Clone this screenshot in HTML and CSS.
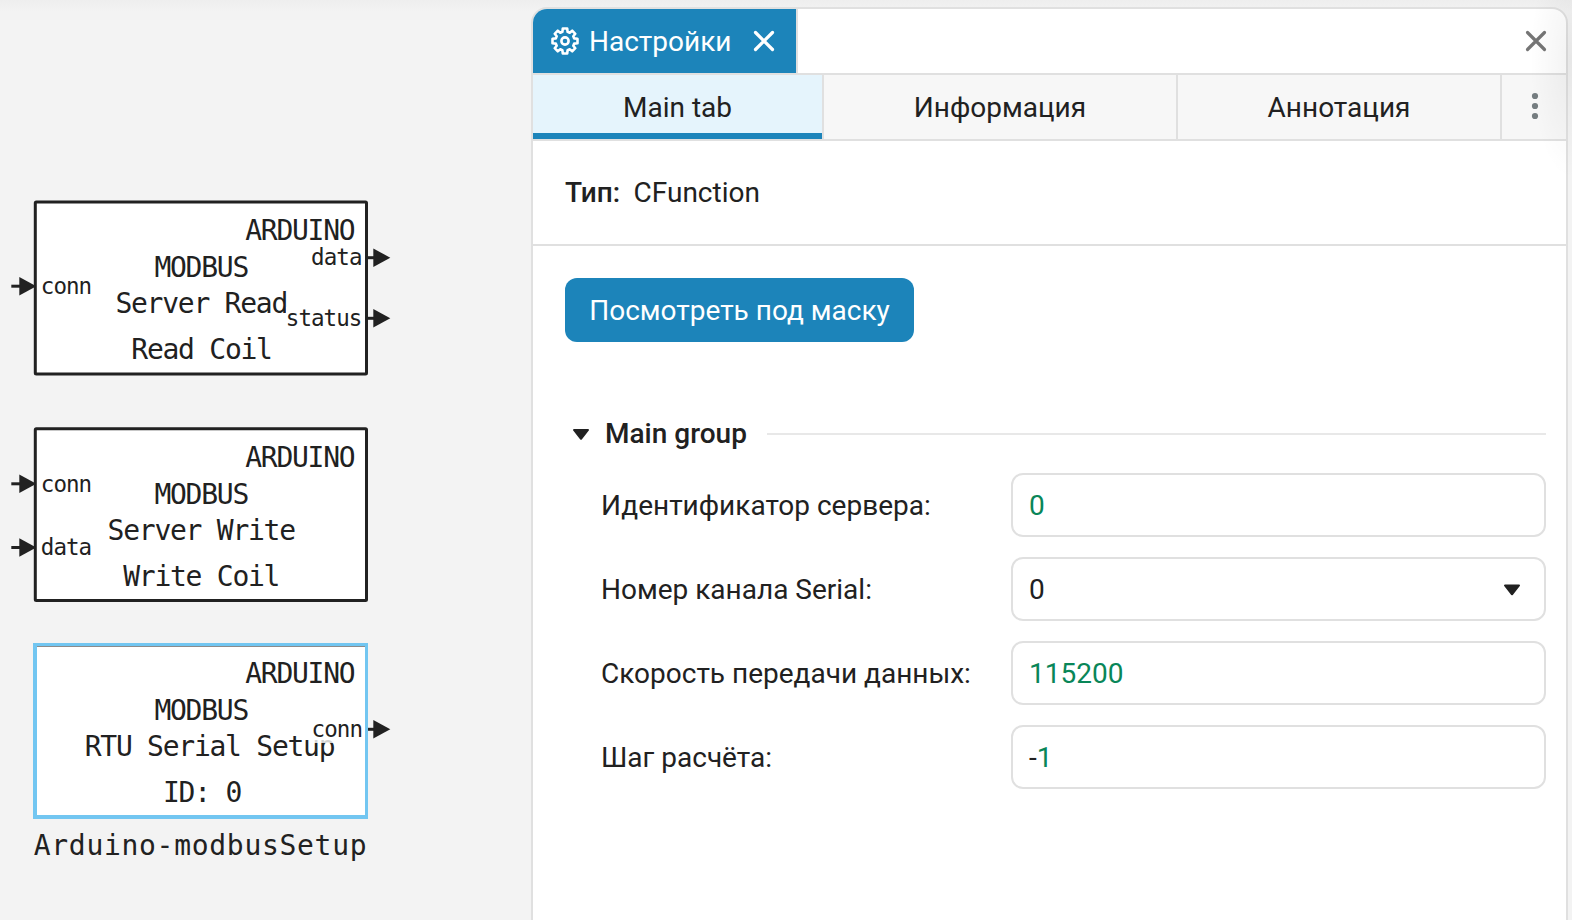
FILE: index.html
```html
<!DOCTYPE html>
<html lang="ru">
<head>
<meta charset="utf-8">
<title>Настройки</title>
<link rel="stylesheet" href="styles.css">
</head>
<body>
<div class="app">
  <svg class="canvas" width="531" height="920" viewBox="0 0 531 920">
    <defs>
      <g id="port"><path d="M0 -1.5H9V1.5H0z"/><path d="M8 -9.3L25 0L8 9.3z"/></g>
      <clipPath id="left-of-block"><rect x="0" y="0" width="34" height="920"/></clipPath>
    </defs>

    <g clip-path="url(#left-of-block)">
      <use href="#port" x="11.3" y="286.2"/>
      <use href="#port" x="11.3" y="483.8"/>
      <use href="#port" x="11.3" y="547.5"/>
    </g>
    <use href="#port" x="365.3" y="257.7"/>
    <use href="#port" x="365.3" y="318.3"/>
    <use href="#port" x="365.3" y="729.3"/>

    <rect class="block" x="35.3" y="202" width="331.2" height="172" rx="1"/>
    <g class="title">
      <text x="299.8" y="240.3">ARDUINO</text>
      <text x="201.2" y="277">MODBUS</text>
      <text x="201.2" y="313">Server Read</text>
      <text x="201.5" y="359">Read Coil</text>
    </g>
    <rect class="veil" x="286" y="307" width="78" height="25"/>
    <g class="port-name">
      <text x="66" y="294">conn</text>
      <text x="336.3" y="265">data</text>
      <text x="323.6" y="326">status</text>
    </g>

    <rect class="block" x="35.3" y="428.8" width="331.2" height="171.6" rx="1"/>
    <g class="title">
      <text x="299.8" y="467">ARDUINO</text>
      <text x="201.2" y="503.8">MODBUS</text>
      <text x="201.2" y="539.7">Server Write</text>
      <text x="201.2" y="585.8">Write Coil</text>
    </g>
    <g class="port-name">
      <text x="66" y="492">conn</text>
      <text x="66" y="555">data</text>
    </g>

    <path class="selected-fill" d="M33 643H368V819H33z"/>
    <path class="selected-inner" d="M37 646H365V815H37z"/>
    <path class="selected-line" d="M37 646H365V647H37z"/>
    <g class="title">
      <text x="299.8" y="683">ARDUINO</text>
      <text x="201.2" y="719.8">MODBUS</text>
      <text x="209.5" y="755.7">RTU Serial Setup</text>
      <text x="202" y="801.8">ID: 0</text>
    </g>
    <rect class="veil" x="314" y="722" width="50" height="21"/>
    <g class="port-name"><text x="336.8" y="737">conn</text></g>
    <text class="caption" x="200.5" y="855">Arduino-modbusSetup</text>
  </svg>

  <section class="panel">
    <header class="panel-head">
      <div class="panel-tab">
        <svg class="gear" width="28" height="28" viewBox="-14 -14 28 28">
          <path d="M-2.2 -12.5H2.2L2.6 -9.2 4.7 -8.3 7.2 -10.3 10.3 -7.2 8.3 -4.7 9.2 -2.6 12.5 -2.2V2.2L9.2 2.6 8.3 4.7 10.3 7.2 7.2 10.3 4.7 8.3 2.6 9.2 2.2 12.5H-2.2L-2.6 9.2 -4.7 8.3 -7.2 10.3 -10.3 7.2 -8.3 4.7 -9.2 2.6 -12.5 2.2V-2.2L-9.2 -2.6 -8.3 -4.7 -10.3 -7.2 -7.2 -10.3 -4.7 -8.3 -2.6 -9.2z"/>
          <circle r="3.6"/>
        </svg>
        <span class="panel-tab-text">Настройки</span>
        <svg class="cross" width="22" height="22" viewBox="0 0 22 22"><path d="M2.5 2.5 19.5 19.5M19.5 2.5 2.5 19.5"/></svg>
      </div>
      <svg class="cross cross-gray" width="22" height="22" viewBox="0 0 22 22"><path d="M2.5 2.5 19.5 19.5M19.5 2.5 2.5 19.5"/></svg>
    </header>
    <nav class="tabs">
      <div class="tab tab-main">Main tab</div>
      <div class="tab tab-info">Информация</div>
      <div class="tab tab-note">Аннотация</div>
      <div class="tab tab-more">
        <svg width="8" height="28" viewBox="0 0 8 28"><circle cx="4" cy="4" r="3.1"/><circle cx="4" cy="14" r="3.1"/><circle cx="4" cy="24" r="3.1"/></svg>
      </div>
    </nav>
    <div class="type-row"><b>Тип:</b><span>CFunction</span></div>
    <div class="content">
      <button class="mask-button">Посмотреть под маску</button>
      <div class="group-head">
        <svg class="caret" width="18" height="14" viewBox="0 0 18 14"><path d="M2 3H16L9 11.8z"/></svg>
        <span class="group-title">Main group</span>
        <span class="group-line"></span>
      </div>
      <div class="fields">
        <span class="label">Идентификатор сервера:</span><div class="field number">0</div>
        <span class="label">Номер канала Serial:</span>
        <div class="field">0<svg class="caret" width="18" height="12" viewBox="0 0 18 12"><path d="M2 1.5H16L9 10.3z"/></svg></div>
        <span class="label">Скорость передачи данных:</span><div class="field number">115200</div>
        <span class="label">Шаг расчёта:</span><div class="field number"><span class="sign">-</span>1</div>
      </div>
    </div>
  </section>
  <div class="edge-shade"></div>
</div>
</body>
</html>
```
FILE: styles.css
```css
* { box-sizing: border-box; }
body { margin: 0; background: #f3f3f3; color: #212121; font: 28px/32px Roboto, "Liberation Sans", sans-serif; }
.app { position: relative; display: flex; width: 1572px; height: 920px; overflow: hidden; background: linear-gradient(#eeeeee, #f3f3f3 12px); }

.canvas { display: block; flex: none; fill: #212121; font-family: "DejaVu Sans Mono", monospace; text-anchor: middle; }
.canvas text { white-space: pre; }
.block { fill: #fff; stroke: #212121; stroke-width: 3; }
.selected-fill { fill: #72c6f1; }
.selected-inner { fill: #fff; }
.selected-line { fill: #8c8c8c; }
.title { font-size: 28px; letter-spacing: -1.26px; }
.port-name { font-size: 22.5px; letter-spacing: -0.95px; }
.caption { font-size: 28px; letter-spacing: 0.7px; }
.veil { fill: #fff; fill-opacity: 0.8; }

.panel { display: flex; flex-direction: column; flex: none; width: 1037px; height: 930px; margin-top: 7px; border: 2px solid #e0e0e0; border-radius: 16px 16px 0 0; background: #fff; overflow: hidden; }
.panel-head { display: flex; flex: none; align-items: center; justify-content: space-between; height: 66px; padding-right: 19px; border-bottom: 2px solid #e0e0e0; }
.panel-tab { display: flex; align-items: center; width: 265px; height: 64px; padding-left: 18px; border-right: 2px solid #e0e0e0; background: #1c84ba; color: #fff; }
.gear { flex: none; fill: none; stroke: #fff; stroke-width: 2.6; stroke-linejoin: round; }
.panel-tab-text { width: 144px; margin: 0 20px 0 10px; padding-top: 2px; }
.cross { flex: none; fill: none; stroke: #fff; stroke-width: 3.2; stroke-linecap: round; }
.cross-gray { stroke: #757575; }

.tabs { display: flex; flex: none; height: 66px; border-bottom: 2px solid #e0e0e0; background: #f7f7f7; }
.tab { display: flex; align-items: center; justify-content: center; padding-top: 2px; border-right: 2px solid #e0e0e0; }
.tab-main { width: 291px; background: linear-gradient(#1c84ba, #1c84ba) bottom / 100% 6px no-repeat #e5f4fc; }
.tab-info { width: 354px; }
.tab-note { width: 324px; }
.tab-more { flex: 1; border-right: 0; padding: 0 0 2px 2px; fill: #757d80; }

.type-row { display: flex; flex: none; align-items: center; gap: 13.5px; height: 105px; padding-left: 32px; border-bottom: 2px solid #e0e0e0; }
.type-row b, .group-title { font-weight: 500; }
.content { display: flex; flex-direction: column; padding: 32px 20px 0 32px; }
.mask-button { width: 349px; height: 64px; padding: 2px 0 0; border: 0; border-radius: 12px; background: #1c84ba; color: #fff; font: inherit; }
.group-head { display: flex; align-items: center; height: 32px; margin-top: 76px; padding-left: 7px; }
.caret { flex: none; fill: #212121; stroke: #212121; stroke-width: 2; stroke-linejoin: round; }
.group-title { width: 147px; margin: 0 15px 0 15px; white-space: nowrap; }
.group-line { flex: 1; height: 2px; background: #e8e8e8; }
.fields { display: grid; grid-template-columns: 410px 535px; row-gap: 20px; align-items: center; padding-left: 36px; margin-top: 23px; }
.label { padding-top: 2px; white-space: nowrap; }
.field { display: flex; align-items: center; height: 64px; padding: 2px 23px 0 16px; border: 2px solid #e0e0e0; border-radius: 12px; }
.field .caret { margin-left: auto; }
.number { color: #098658; }
.sign { color: #212121; }

.edge-shade { position: absolute; top: 0; right: 0; width: 42px; height: 180px; background: radial-gradient(ellipse 42px 120px at 100% 60px, rgba(0, 0, 0, 0.05), transparent); }
```
